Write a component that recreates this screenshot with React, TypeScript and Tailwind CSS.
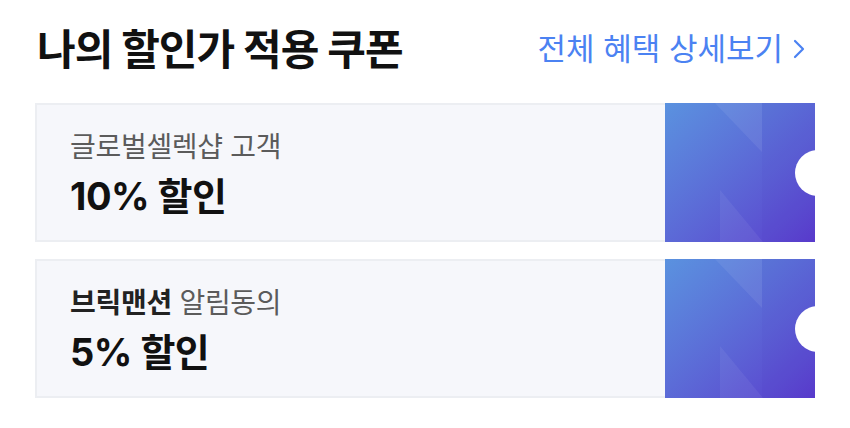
import React from "react";

const FONT = { fontFamily: '"Inter", "Noto Sans CJK KR", sans-serif' };

function TicketArt() {
  return (
    <div className="relative w-[150px] shrink-0 overflow-hidden bg-gradient-to-br from-[#5a92df] to-[#5a3bcd]">
      <svg
        className="absolute inset-0 h-full w-full"
        viewBox="0 0 150 139"
        preserveAspectRatio="none"
      >
        <polygon points="50,0 97,0 97,49" fill="#ffffff" fillOpacity="0.07" />
        <polygon points="97,0 150,0 150,139 97,139" fill="#3a2fb0" fillOpacity="0.05" />
        <polygon points="55,87 55,139 98,139" fill="#ffffff" fillOpacity="0.06" />
      </svg>
      {/* notch */}
      <div className="absolute right-[-26px] top-1/2 h-[46px] w-[46px] -translate-y-1/2 rounded-full bg-white" />
    </div>
  );
}

function CouponCard({
  label,
  discount,
}: {
  label: React.ReactNode;
  discount: string;
}) {
  return (
    <div className="flex h-[139px]">
      <div className="flex flex-1 flex-col justify-center gap-[10px] border-2 border-r-0 border-[#eceef2] bg-[#f6f7fb] pl-[33px]">
        <div className="text-[28px] leading-[36px] tracking-[-0.3px] text-[#5b5b5b]">{label}</div>
        <div className="text-[38px] font-bold leading-[42px] tracking-[-0.5px] text-[#111]">
          {discount}
        </div>
      </div>
      <TicketArt />
    </div>
  );
}

export default function App() {
  return (
    <div className="min-h-screen bg-white px-[35px] pt-[24px]" style={FONT}>
      {/* Header */}
      <div className="flex h-[50px] items-center justify-between">
        <h2 className="pl-[2px] text-[42px] font-bold tracking-[-1px] text-[#111]">
          나의 할인가 적용 쿠폰
        </h2>
        <button type="button" className="mr-[10px] flex items-center gap-[10px] text-[31px] text-[#4b82f2]">
          전체 혜택 상세보기
          <svg width="12" height="20" viewBox="0 0 12 20" fill="none" stroke="currentColor" strokeWidth={2.2}>
            <path d="M2 2l8 8-8 8" strokeLinecap="round" strokeLinejoin="round" />
          </svg>
        </button>
      </div>

      {/* Coupons */}
      <div className="mt-[29px] flex flex-col gap-[17px]">
        <CouponCard label="글로벌셀렉샵 고객" discount="10% 할인" />
        <CouponCard
          label={
            <>
              <span className="font-bold text-[#222]">브릭맨션</span> 알림동의
            </>
          }
          discount="5% 할인"
        />
      </div>
    </div>
  );
}
